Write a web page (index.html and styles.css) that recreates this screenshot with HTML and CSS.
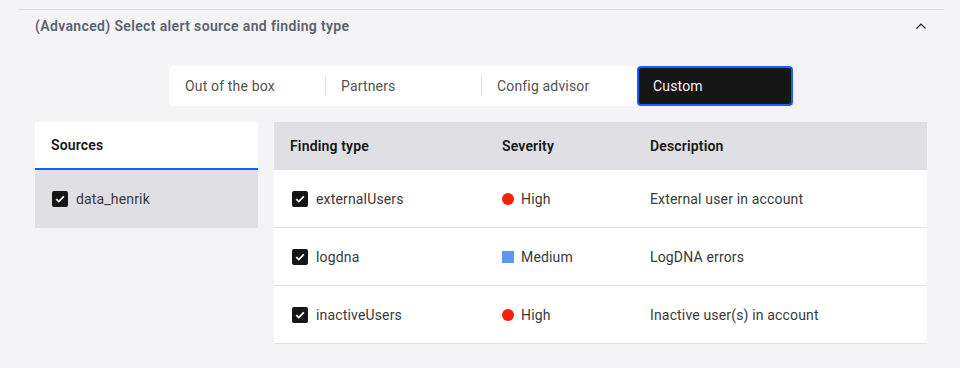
FILE: index.html
```html
<!DOCTYPE html>
<html lang="en">
<head>
    <meta charset="UTF-8">
    <meta name="viewport" content="width=device-width, initial-scale=1.0">
    <title>Alert source and finding type</title>
    <link rel="stylesheet" href="styles.css">
</head>
<body>
    <div class="accordion">
        <div class="accordion-heading">
            <span class="accordion-title">(Advanced) Select alert source and finding type</span>
            <svg class="chevron" width="16" height="16" viewBox="0 0 16 16">
                <path d="M3.5 10.5 L8 6 L12.5 10.5" fill="none" stroke="#161616" stroke-width="1.2"/>
            </svg>
        </div>
        <div class="accordion-content">
            <div class="switcher-wrap">
                <div class="switcher">
                    <button class="switch">Out of the box</button>
                    <button class="switch">Partners</button>
                    <button class="switch">Config advisor</button>
                    <button class="switch selected">Custom</button>
                </div>
            </div>
            <div class="panels">
                <div class="sources">
                    <div class="sources-head">Sources</div>
                    <div class="sources-row">
                        <span class="checkbox"><svg width="10" height="8" viewBox="0 0 10 8"><path d="M1.2 4.2 L3.8 6.6 L8.8 1.4" fill="none" stroke="#fff" stroke-width="1.8"/></svg></span>
                        <span>data_henrik</span>
                    </div>
                </div>
                <table class="findings">
                    <thead>
                        <tr>
                            <th class="col-type">Finding type</th>
                            <th class="col-sev">Severity</th>
                            <th class="col-desc">Description</th>
                        </tr>
                    </thead>
                    <tbody>
                        <tr>
                            <td><div class="cell-check"><span class="checkbox"><svg width="10" height="8" viewBox="0 0 10 8"><path d="M1.2 4.2 L3.8 6.6 L8.8 1.4" fill="none" stroke="#fff" stroke-width="1.8"/></svg></span>externalUsers</div></td>
                            <td><div class="severity"><span class="dot high"></span>High</div></td>
                            <td>External user in account</td>
                        </tr>
                        <tr>
                            <td><div class="cell-check"><span class="checkbox"><svg width="10" height="8" viewBox="0 0 10 8"><path d="M1.2 4.2 L3.8 6.6 L8.8 1.4" fill="none" stroke="#fff" stroke-width="1.8"/></svg></span>logdna</div></td>
                            <td><div class="severity"><span class="dot medium"></span>Medium</div></td>
                            <td>LogDNA errors</td>
                        </tr>
                        <tr>
                            <td><div class="cell-check"><span class="checkbox"><svg width="10" height="8" viewBox="0 0 10 8"><path d="M1.2 4.2 L3.8 6.6 L8.8 1.4" fill="none" stroke="#fff" stroke-width="1.8"/></svg></span>inactiveUsers</div></td>
                            <td><div class="severity"><span class="dot high"></span>High</div></td>
                            <td>Inactive user(s) in account</td>
                        </tr>
                    </tbody>
                </table>
            </div>
        </div>
    </div>
</body>
</html>
```

FILE: styles.css
```css
body {
    margin: 0;
    padding: 9px 16px 0 19px;
    background-color: #f4f3f6;
    font-family: Roboto, 'Noto Sans', sans-serif;
    font-size: 14px;
    letter-spacing: 0.16px;
    color: #393939;
}
.accordion {
    border-top: 1px solid #e0e0e0;
}
.accordion-heading {
    display: flex;
    align-items: center;
    justify-content: space-between;
    padding: 6px 15px 0 16px;
    height: 20px;
    line-height: 20px;
}
.accordion-title {
    font-weight: 600;
    letter-spacing: 0.36px;
    color: #5a6171;
}
.accordion-content {
    padding: 30px 17px 0 16px;
}
.switcher-wrap {
    display: flex;
    justify-content: center;
}
.switcher {
    display: flex;
    width: 624px;
    height: 40px;
    background-color: #fff;
    border-radius: 4px;
}
.switch {
    flex: 1;
    position: relative;
    border: none;
    background: none;
    font-family: inherit;
    font-size: 14px;
    letter-spacing: inherit;
    color: #525252;
    text-align: left;
    padding: 0 16px;
}
.switch + .switch::before {
    content: "";
    position: absolute;
    left: 0;
    top: 10px;
    height: 20px;
    border-left: 1px solid #e0e0e0;
}
.switch.selected {
    background-color: #161616;
    color: #f4f4f4;
    border: 2px solid #0f62fe;
    border-radius: 4px;
    padding: 0 14px;
}
.switch.selected::before {
    display: none;
}
.panels {
    display: flex;
    gap: 16px;
    margin-top: 16px;
    align-items: flex-start;
}
.sources {
    width: 223px;
}
.sources-head {
    height: 46px;
    line-height: 46px;
    padding-left: 16px;
    background-color: #fff;
    border-bottom: 2px solid #0f62fe;
    font-weight: 600;
    color: #161616;
}
.sources-row {
    display: flex;
    align-items: center;
    gap: 8px;
    height: 58px;
    padding-left: 17px;
    background-color: #e0dfe3;
    color: #393939;
}
.checkbox {
    display: inline-flex;
    align-items: center;
    justify-content: center;
    width: 16px;
    height: 16px;
    border-radius: 2px;
    background-color: #161616;
    flex-shrink: 0;
}
.findings {
    flex: 1;
    border-collapse: collapse;
    background-color: #fff;
}
.findings th {
    height: 48px;
    padding: 0 16px;
    text-align: left;
    font-weight: 600;
    color: #161616;
    background-color: #e0dfe3;
}
.findings td {
    height: 56px;
    padding: 1px 16px 0;
    border-bottom: 1px solid #e0e0e0;
    color: #393939;
}
.col-type { width: 180px; }
.col-sev { width: 116px; }
.cell-check,
.severity {
    display: flex;
    align-items: center;
    gap: 8px;
}
.cell-check { padding-left: 2px; }
.severity { gap: 7px; }
.dot {
    width: 12px;
    height: 12px;
}
.dot.high {
    border-radius: 50%;
    background-color: #fa1e0a;
}
.dot.medium {
    background-color: #5b96f5;
}
```
